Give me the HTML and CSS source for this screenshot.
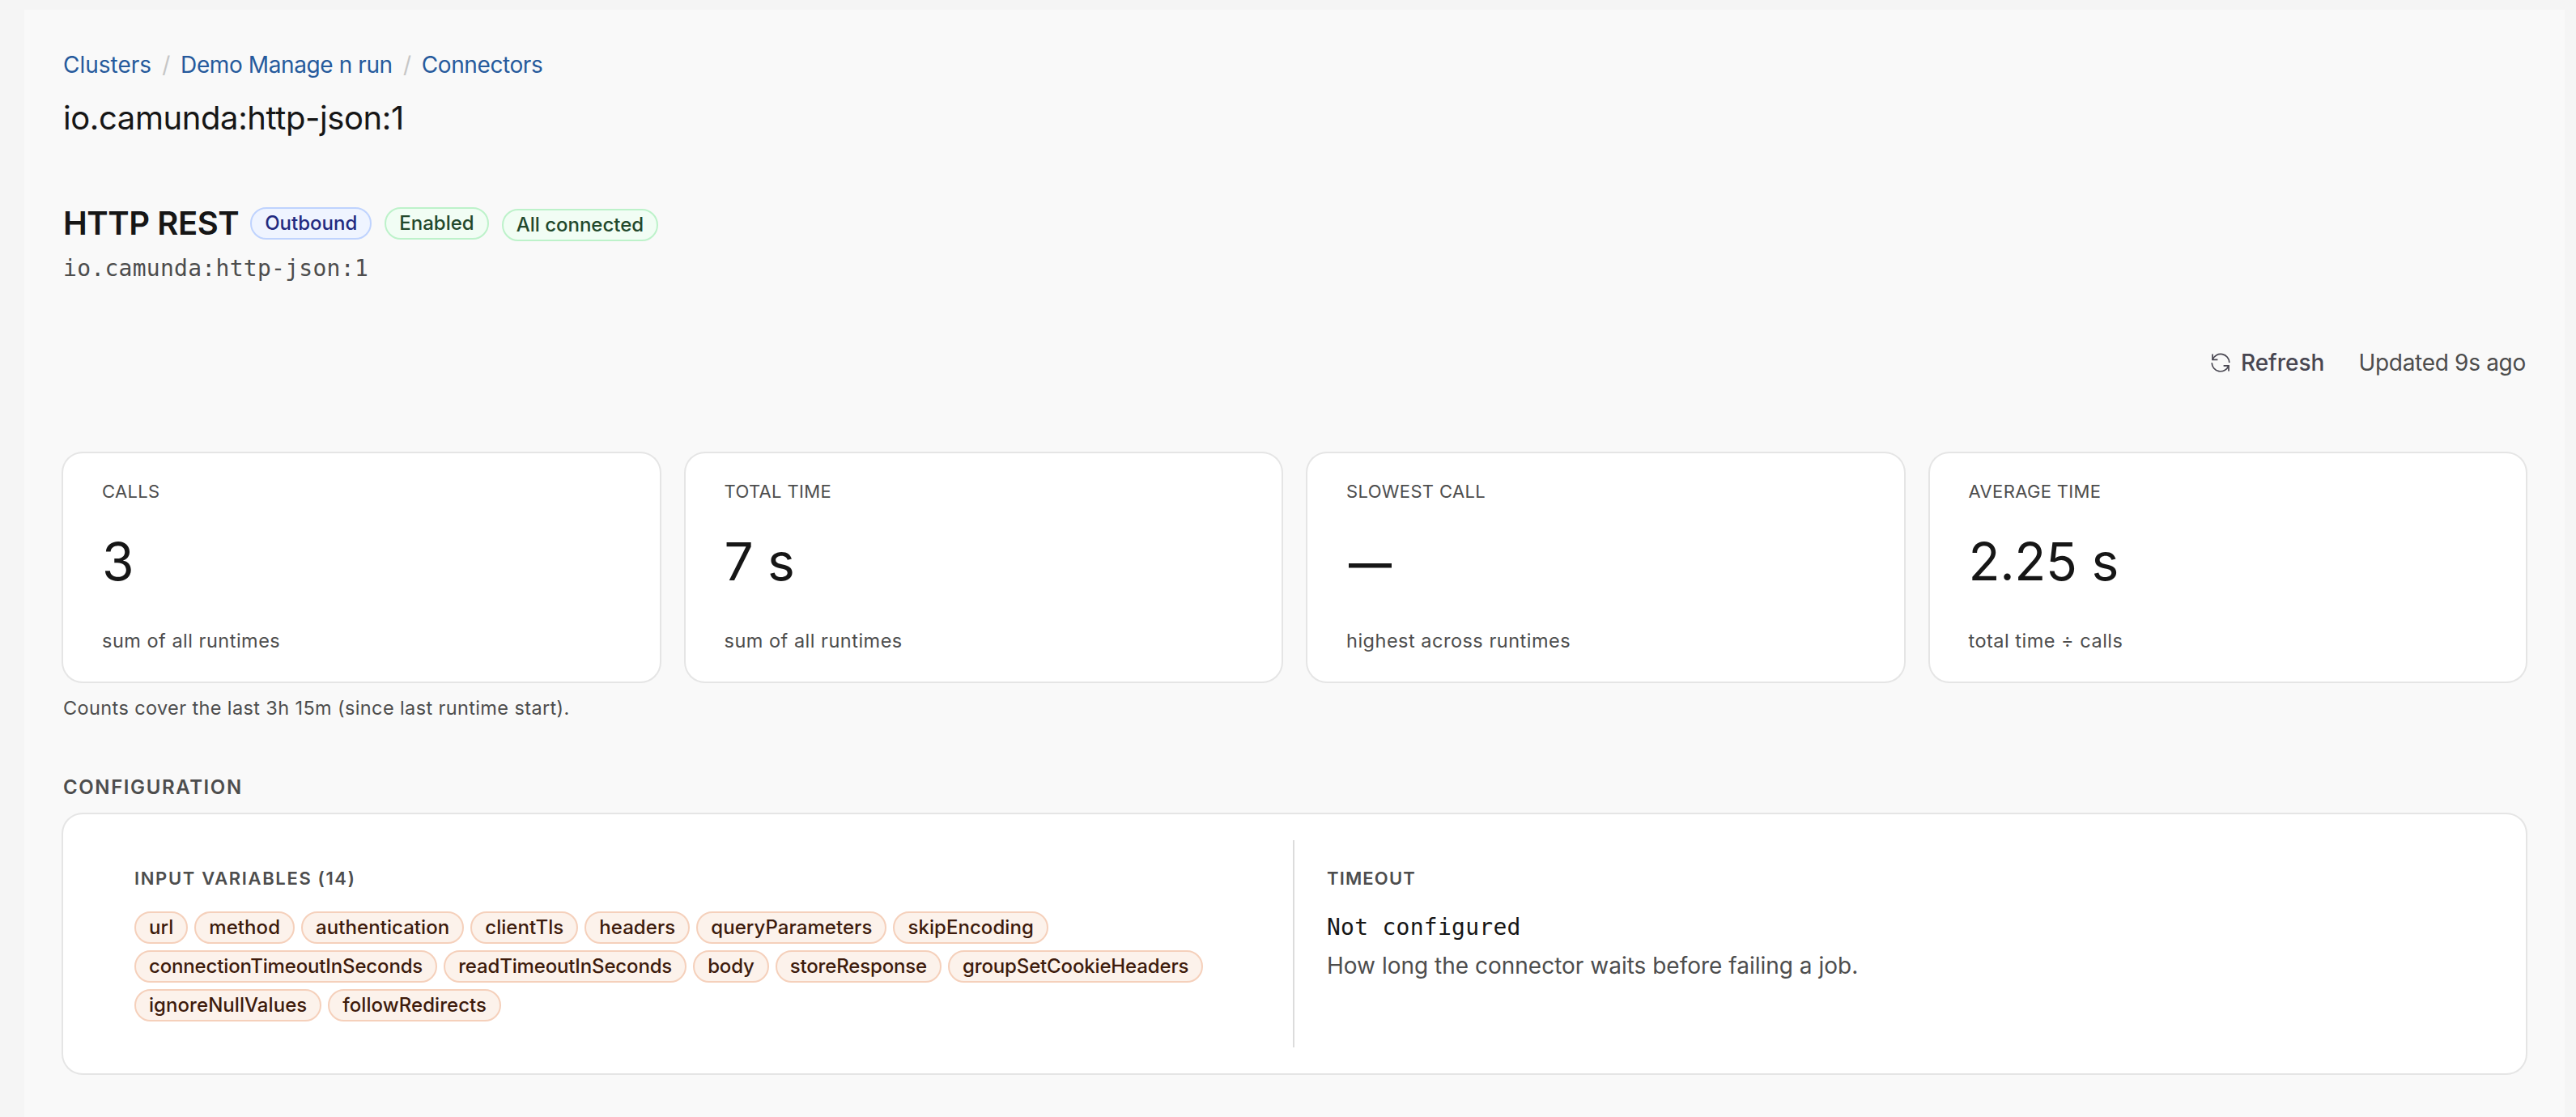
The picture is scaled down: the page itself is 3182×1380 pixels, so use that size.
FILE: index.html
```html
<!DOCTYPE html>
<html lang="en">
<head>
<meta charset="UTF-8">
<meta name="viewport" content="width=device-width, initial-scale=1.0">
<title>io.camunda:http-json:1</title>
<link rel="stylesheet" href="styles.css">
</head>
<body>

<main class="page">

  <nav class="breadcrumb">
    <a href="#">Clusters</a>
    <span class="separator">/</span>
    <a href="#">Demo Manage n run</a>
    <span class="separator">/</span>
    <a href="#">Connectors</a>
  </nav>
  <h1 class="page-title">io.camunda:http-json:1</h1>

  <header class="connector-header">
    <h2 class="connector-name">HTTP REST</h2>
    <span class="tag tag-blue">Outbound</span>
    <span class="tag tag-green">Enabled</span>
    <span class="tag tag-green tag-status">All connected</span>
  </header>
  <p class="connector-type">io.camunda:http-json:1</p>

  <div class="toolbar">
    <button class="refresh-button" type="button">
      <svg class="refresh-icon" viewBox="0 0 24 24" fill="none" stroke="currentColor" stroke-width="1.7">
        <path d="M2 1.6V8.3H8.4"/>
        <path d="M2.2 8.1A10.7 10.7 0 0 1 22.8 12"/>
        <path d="M22 22.4V15.9H15.6"/>
        <path d="M21.8 16.1A10.7 10.7 0 0 1 1.2 12.2"/>
      </svg>
      Refresh
    </button>
    <span class="updated">Updated 9s ago</span>
  </div>

  <section class="stats">
    <div class="card stat">
      <div class="stat-label">CALLS</div>
      <div class="stat-value">3</div>
      <div class="stat-note">sum of all runtimes</div>
    </div>
    <div class="card stat">
      <div class="stat-label">TOTAL TIME</div>
      <div class="stat-value">7 s</div>
      <div class="stat-note">sum of all runtimes</div>
    </div>
    <div class="card stat">
      <div class="stat-label">SLOWEST CALL</div>
      <div class="stat-value stat-empty">—</div>
      <div class="stat-note">highest across runtimes</div>
    </div>
    <div class="card stat">
      <div class="stat-label">AVERAGE TIME</div>
      <div class="stat-value">2.25 s</div>
      <div class="stat-note">total time ÷ calls</div>
    </div>
  </section>
  <p class="stats-footnote">Counts cover the last 3h 15m (since last runtime start).</p>

  <h3 class="section-title">CONFIGURATION</h3>
  <section class="card config">
    <div class="config-inputs">
      <h4 class="config-title">INPUT VARIABLES (14)</h4>
      <div class="tag-list">
        <span class="tag tag-orange">url</span>
        <span class="tag tag-orange">method</span>
        <span class="tag tag-orange">authentication</span>
        <span class="tag tag-orange">clientTls</span>
        <span class="tag tag-orange">headers</span>
        <span class="tag tag-orange">queryParameters</span>
        <span class="tag tag-orange">skipEncoding</span>
        <span class="tag tag-orange tag-tight">connectionTimeoutInSeconds</span>
        <span class="tag tag-orange tag-tight">readTimeoutInSeconds</span>
        <span class="tag tag-orange tag-tight">body</span>
        <span class="tag tag-orange tag-tight">storeResponse</span>
        <span class="tag tag-orange tag-tight">groupSetCookieHeaders</span>
        <span class="tag tag-orange">ignoreNullValues</span>
        <span class="tag tag-orange">followRedirects</span>
      </div>
    </div>
    <div class="config-timeout">
      <h4 class="config-title">TIMEOUT</h4>
      <p class="timeout-value">Not configured</p>
      <p class="timeout-help">How long the connector waits before failing a job.</p>
    </div>
  </section>

</main>

</body>
</html>
```
FILE: styles.css
```css
/* --- Basic Setup --- */
* {
  box-sizing: border-box;
}

body {
  margin: 0;
  padding: 12px 14px 0 30px;
  min-height: 100vh;
  background-color: #f5f5f5;
  color: #161616;
  font-family: Inter, "Liberation Sans", sans-serif;
  font-size: 28px;
  line-height: 40px;
}

h1, h2, h3, h4, p {
  margin: 0;
}

.page {
  min-height: calc(100vh - 12px);
  padding: 48px;
  background-color: #f9f9f9;
}

/* --- Breadcrumb & Title --- */
.breadcrumb {
  display: flex;
  letter-spacing: -0.4px;
}

.breadcrumb a {
  color: #265a9c;
  text-decoration: none;
}

.breadcrumb a:first-child {
  letter-spacing: 0;
}

.separator {
  width: 36px;
  text-align: center;
  color: #c6c6c6;
}

.page-title {
  margin-top: 18px;
  font-size: 40px;
  font-weight: 400;
  line-height: 56px;
  letter-spacing: -0.4px;
}

/* --- Connector Header --- */
.connector-header {
  display: flex;
  align-items: flex-start;
  gap: 16px;
  height: 48px;
  margin-top: 78px;
}

.connector-name {
  margin-right: -2px;
  font-size: 40px;
  font-weight: 600;
  line-height: 48px;
  letter-spacing: -0.45px;
}

.connector-header .tag {
  margin-top: 4px;
}

.connector-header .tag-status {
  margin-top: 6px;
}

.connector-type {
  margin-top: 12px;
  color: #4d4d4d;
  font-family: "DejaVu Sans Mono", monospace;
  letter-spacing: 0.28px;
}

/* --- Tags --- */
.tag {
  height: 40px;
  padding: 0 16px;
  border: 2px solid;
  border-radius: 20px;
  font-size: 24px;
  font-weight: 500;
  line-height: 36px;
  white-space: nowrap;
}

.tag-blue {
  border-color: #bfd3fe;
  background-color: #eff4ff;
  color: #222a80;
}

.tag-green {
  border-color: #bdf2ca;
  background-color: #f1fdf4;
  color: #22482c;
}

.tag-orange {
  border-color: #f5d0bb;
  background-color: #fcf2eb;
  color: #3d1b0c;
  letter-spacing: 0.06px;
}

.tag-tight {
  letter-spacing: -0.15px;
}

.tag-list {
  display: flex;
  flex-wrap: wrap;
  gap: 8px;
  margin-top: 25px;
}

/* --- Toolbar --- */
.toolbar {
  display: flex;
  justify-content: flex-end;
  align-items: center;
  gap: 42px;
  margin-top: 76px;
}

.refresh-button {
  display: flex;
  align-items: center;
  gap: 13px;
  padding: 0;
  border: none;
  background: none;
  color: #484651;
  font: inherit;
  font-weight: 500;
  cursor: pointer;
}

.refresh-icon {
  width: 24px;
  height: 24px;
}

.updated {
  color: #4d4d4d;
  letter-spacing: -0.3px;
}

/* --- Cards --- */
.card {
  border-radius: 24px;
  background-color: #fff;
  box-shadow: 0 0 0 2px #e5e5e5;
}

.stats {
  display: grid;
  grid-template-columns: repeat(4, 1fr);
  gap: 32px;
  margin-top: 92px;
}

.stat {
  padding: 31px 48px 34px;
}

.stat-label {
  color: #4d4d4d;
  font-size: 22px;
  line-height: 32px;
  letter-spacing: 0.35px;
}

.stat-value {
  height: 80px;
  margin: 31px 0 42px;
  font-size: 64px;
  line-height: 80px;
  letter-spacing: -0.3px;
}

.stat-empty {
  padding-left: 3px;
  font-size: 53px;
  font-weight: 600;
  line-height: 84px;
}

.stat-note,
.stats-footnote {
  color: #4d4d4d;
  font-size: 23.5px;
  line-height: 32px;
  letter-spacing: 0.5px;
}

.stats-footnote {
  margin-top: 17px;
  letter-spacing: 0.38px;
}

/* --- Configuration --- */
.section-title {
  margin: 66px 0 17px;
  color: #4d4d4d;
  font-size: 24px;
  font-weight: 600;
  line-height: 32px;
  letter-spacing: 1.6px;
}

.config {
  display: grid;
  grid-template-columns: 1fr 1fr;
  height: 320px;
  padding: 32px 0;
}

.config-inputs {
  padding: 31px 100px 0 88px;
  border-right: 2px solid #dcdcdc;
}

.config-timeout {
  padding: 31px 40px 0;
}

.config-title {
  color: #4d4d4d;
  font-size: 22px;
  font-weight: 600;
  line-height: 32px;
  letter-spacing: 1.65px;
}

.config-timeout .config-title {
  letter-spacing: 1.15px;
}

.timeout-value {
  margin: 25px 0 7px;
  font-family: "DejaVu Sans Mono", monospace;
  letter-spacing: 0.26px;
}

.timeout-help {
  color: #4d4d4d;
}
```
